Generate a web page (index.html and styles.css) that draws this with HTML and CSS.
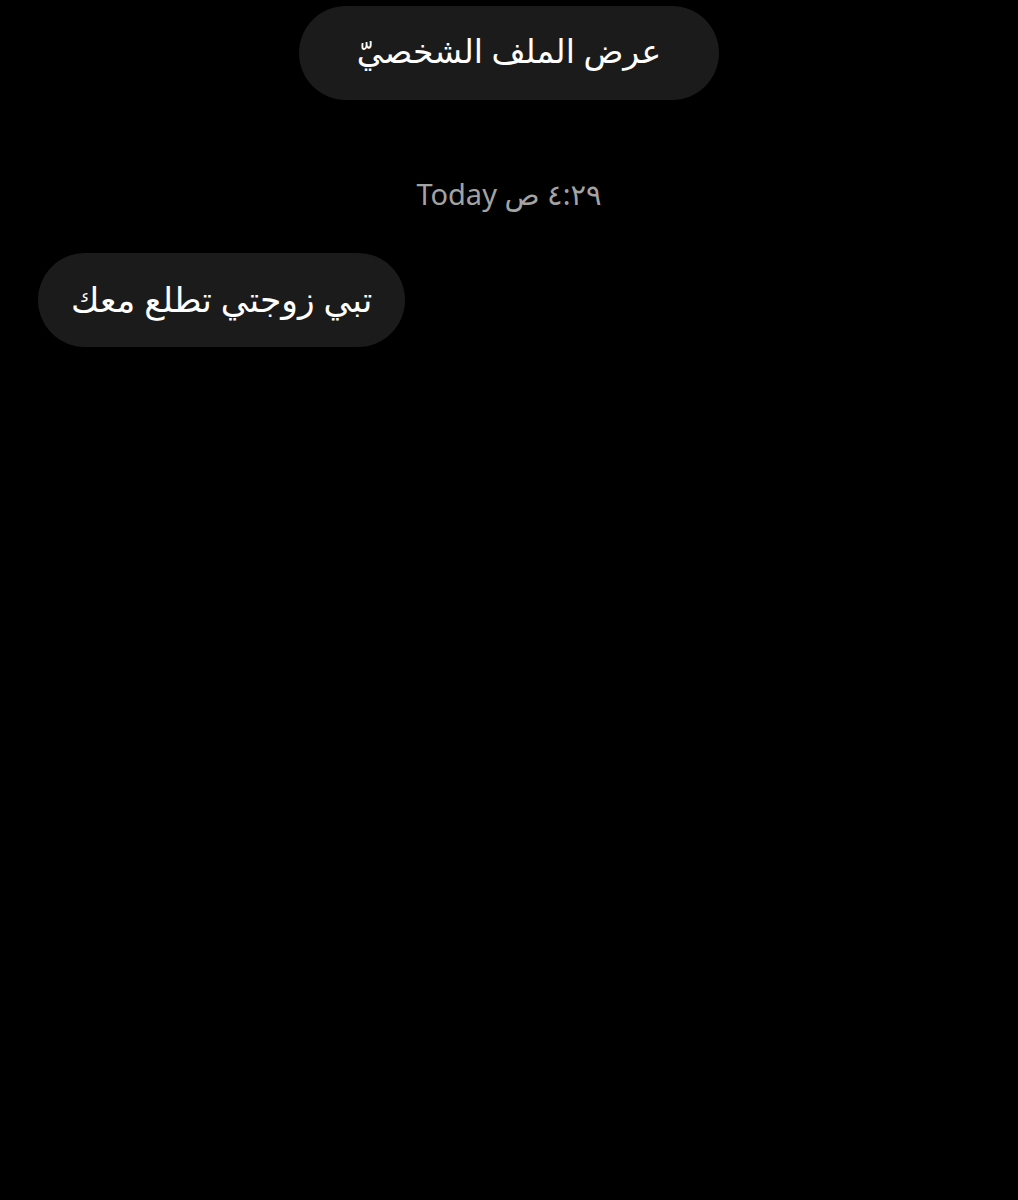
FILE: index.html
```html
<!DOCTYPE html>
<html lang="ar">
<head>
<meta charset="utf-8">
<link rel="stylesheet" href="styles.css">
</head>
<body>
<main class="chat">
  <div class="top">
    <button class="profile-btn" dir="rtl">عرض الملف الشخصيّ</button>
  </div>
  <div class="stamp" dir="rtl">٤:٢٩ ص Today</div>
  <div class="row">
    <div class="bubble" dir="rtl">تبي زوجتي تطلع معك</div>
  </div>
</main>
</body>
</html>
```
FILE: styles.css
```css
html, body {
  margin: 0;
  padding: 0;
  background: #000;
  height: 100%;
}
.chat {
  display: flex;
  flex-direction: column;
  padding: 6px 38px 0;
  font-family: "Noto Sans", "DejaVu Sans", sans-serif;
}
.top {
  display: flex;
  justify-content: center;
}
.profile-btn {
  width: 420px;
  height: 94px;
  border: none;
  border-radius: 47px;
  background: #1b1b1b;
  color: #fff;
  font-family: "Noto Sans", "DejaVu Sans", sans-serif;
  font-size: 33px;
  padding: 0 0 5px;
}
.stamp {
  margin-top: 74px;
  text-align: center;
  color: #a3a3a3;
  font-size: 29px;
  line-height: 40px;
}
.row {
  display: flex;
  margin-top: 39px;
}
.bubble {
  height: 94px;
  box-sizing: border-box;
  padding: 0 33px 3px;
  display: flex;
  align-items: center;
  border-radius: 47px;
  background: #1b1b1b;
  color: #fff;
  font-size: 34.5px;
}
```
